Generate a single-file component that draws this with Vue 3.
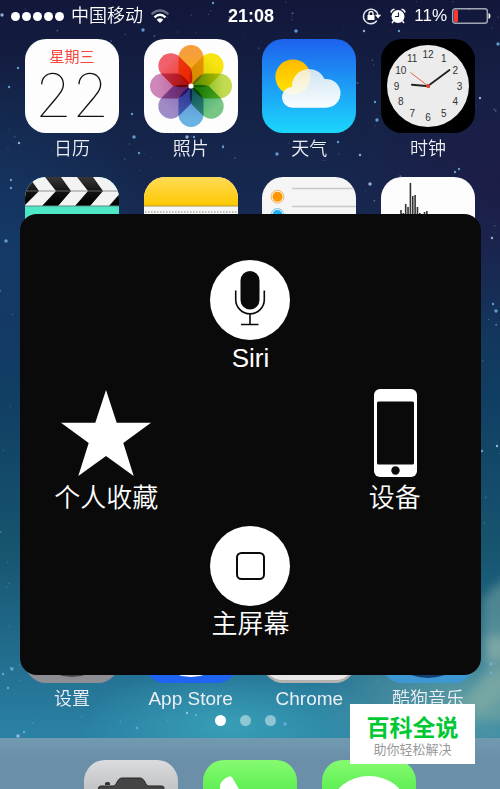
<template>
  <main class="phone">
    <svg class="wallpaper" viewBox="0 0 500 789" preserveAspectRatio="none" aria-hidden="true">
      <defs>
        <linearGradient id="sky" x1="0" y1="0" x2="0" y2="1">
          <stop offset="0" stop-color="#12173a" />
          <stop offset="0.12" stop-color="#142145" />
          <stop offset="0.3" stop-color="#172b54" />
          <stop offset="0.5" stop-color="#103e62" />
          <stop offset="0.7" stop-color="#175570" />
          <stop offset="0.84" stop-color="#236f90" />
          <stop offset="0.93" stop-color="#2a81a4" />
          <stop offset="1" stop-color="#2a7898" />
        </linearGradient>
        <radialGradient id="blue-glow">
          <stop offset="0" stop-color="#14406f" stop-opacity="0.7" />
          <stop offset="1" stop-color="#14406f" stop-opacity="0" />
        </radialGradient>
        <radialGradient id="violet-glow">
          <stop offset="0" stop-color="#1e1b45" stop-opacity="0.8" />
          <stop offset="1" stop-color="#1e1b45" stop-opacity="0" />
        </radialGradient>
        <radialGradient id="teal-glow">
          <stop offset="0" stop-color="#3ba6bb" stop-opacity="0.8" />
          <stop offset="1" stop-color="#3ba6bb" stop-opacity="0" />
        </radialGradient>
        <radialGradient id="pale-glow">
          <stop offset="0" stop-color="#6fa9a6" stop-opacity="0.7" />
          <stop offset="1" stop-color="#6fa9a6" stop-opacity="0" />
        </radialGradient>
        <filter id="mist" filterUnits="userSpaceOnUse" x="380" y="520" width="220" height="280">
          <feGaussianBlur stdDeviation="5" />
        </filter>
      </defs>
      <rect width="500" height="789" fill="url(#sky)" />
      <ellipse cx="0" cy="250" rx="150" ry="190" fill="url(#blue-glow)" />
      <ellipse cx="500" cy="180" rx="170" ry="150" fill="url(#violet-glow)" />
      <ellipse cx="230" cy="725" rx="150" ry="60" fill="url(#teal-glow)" />
      <ellipse cx="460" cy="700" rx="150" ry="90" fill="url(#pale-glow)" />
      <g filter="url(#mist)">
        <path d="M482 602L492 588L510 578V720H440L470 690L486 670Z" fill="#7fa9a4" opacity="0.5" />
        <path d="M484 640L496 634L508 640V656L488 662Z" fill="#a9c4b4" opacity="0.4" />
        <path d="M470 700L490 672L510 664V690L480 714Z" fill="#8db5a8" opacity="0.4" />
      </g>
      <circle
        v-for="(s, i) in stars"
        :key="i"
        :cx="s.x"
        :cy="s.y"
        :r="s.r"
        :fill="s.color"
        :opacity="s.o"
      />
    </svg>

    <header class="status-bar">
      <div class="status-left">
        <span class="signal"><i v-for="n in 5" :key="n"></i></span>
        <span class="carrier">中国移动</span>
        <svg class="wifi" viewBox="0 0 20 16" aria-hidden="true">
          <g fill="none" stroke-width="2">
            <path d="M1.5 6.2Q10 -1.4 18.500 6.2" stroke="#6d7386" />
            <path d="M4.500 9.300Q10 4.200 15.500 9.300" stroke="#fff" stroke-width="2.400" />
          </g>
          <path d="M6.700 11.700Q10 9 13.300 11.700L10 15Z" fill="#fff" />
        </svg>
      </div>
      <time class="clock-time">21:08</time>
      <div class="status-right">
        <svg class="lock" viewBox="0 0 20 18" aria-hidden="true">
          <path d="M14.800 13.600A7.300 7.300 0 1 1 16 8.500" fill="none" stroke="#e8eaf0" stroke-width="1.400" />
          <path d="M13 7.800H19.200L16.100 11.500Z" fill="#fff" />
          <rect x="5.500" y="8" width="7" height="5" fill="#fff" />
          <path d="M7 8V6.500A2 2 0 0 1 11 6.500V8" fill="none" stroke="#fff" stroke-width="1.300" />
        </svg>
        <svg class="alarm" viewBox="0 0 16 16" aria-hidden="true">
          <circle cx="8" cy="8.500" r="6.500" fill="#fff" />
          <path d="M1 4.500A4 4 0 0 1 4.500 1.200M15 4.500A4 4 0 0 0 11.500 1.200" stroke="#fff" stroke-width="1.600" fill="none" />
          <path d="M3.500 13L2 15M12.500 13L14 15" stroke="#fff" stroke-width="1.500" />
          <path d="M8.500 4.500V8.500H5" fill="none" stroke="#141a3b" stroke-width="1.100" />
        </svg>
        <span class="percent">11%</span>
        <svg class="battery" viewBox="0 0 39 16" aria-hidden="true">
          <rect x="0.700" y="0.700" width="34.600" height="14.600" rx="2.500" fill="none" stroke="#a3a6b5" stroke-width="1.400" />
          <rect x="2" y="2" width="4" height="12" rx="1" fill="#ff3a30" />
          <path d="M36.500 5Q38.500 5.500 38.500 8T36.500 11Z" fill="#fff" />
        </svg>
      </div>
    </header>

    <section class="home">
      <div class="row">
        <button class="app" type="button">
          <span class="icon calendar">
            <span class="weekday">星期三</span>
            <span class="day">22</span>
          </span>
          <span class="name">日历</span>
        </button>
        <button class="app" type="button">
          <span class="icon">
            <svg viewBox="0 0 94 94">
              <defs>
                <linearGradient
                  v-for="(p, i) in petals"
                  :id="`petal-${i}`"
                  :key="i"
                  x1="0"
                  y1="0"
                  x2="0"
                  y2="1"
                >
                  <stop offset="0.200" :stop-color="p.tip" />
                  <stop offset="1" :stop-color="p.base" />
                </linearGradient>
              </defs>
              <rect width="94" height="94" fill="#fdfdfd" />
              <g transform="translate(47 47)">
                <path
                  v-for="(p, i) in petals"
                  :key="i"
                  class="petal"
                  d="M-12.500 -28.500A12.500 12.500 0 0 1 12.500 -28.500V-13Q9 -5 0 0Q-9 -5 -12.500 -13Z"
                  :fill="`url(#petal-${i})`"
                  :transform="`rotate(${i * 45})`"
                />
                <circle r="2.600" fill="#fff" />
              </g>
            </svg>
          </span>
          <span class="name">照片</span>
        </button>
        <button class="app" type="button">
          <span class="icon">
            <svg viewBox="0 0 94 94">
              <defs>
                <linearGradient id="day" x1="0" y1="0" x2="0" y2="1">
                  <stop offset="0" stop-color="#1e62ee" />
                  <stop offset="1" stop-color="#1bd6fc" />
                </linearGradient>
                <linearGradient id="sun" x1="0" y1="0" x2="0" y2="1">
                  <stop offset="0" stop-color="#ffb900" />
                  <stop offset="1" stop-color="#ffe600" />
                </linearGradient>
                <linearGradient id="cloud" x1="0" y1="0" x2="0" y2="1">
                  <stop offset="0" stop-color="#f2f3f2" stop-opacity="0.84" />
                  <stop offset="1" stop-color="#fff" stop-opacity="0.97" />
                </linearGradient>
              </defs>
              <rect width="94" height="94" fill="url(#day)" />
              <circle cx="31" cy="38" r="17.600" fill="url(#sun)" />
              <path
                d="M31 68.700A10.500 10.500 0 0 1 30 47.700A17 17 0 0 1 62.500 40A14.400 14.400 0 1 1 64 68.700Z"
                fill="url(#cloud)"
              />
            </svg>
          </span>
          <span class="name">天气</span>
        </button>
        <button class="app" type="button">
          <span class="icon">
            <svg viewBox="0 0 94 94">
              <rect width="94" height="94" fill="#000" />
              <circle cx="47" cy="47" r="41" fill="#ececec" />
              <text
                v-for="n in hours"
                :key="n.label"
                class="hour"
                :x="n.x"
                :y="n.y"
                text-anchor="middle"
              >{{ n.label }}</text>
              <path d="M48 47.200L31 45.800" stroke="#222" stroke-width="2" stroke-linecap="round" />
              <path d="M47 47L68.500 31" stroke="#222" stroke-width="1.800" stroke-linecap="round" />
              <path d="M49 48.500L29.500 33.500" stroke="#e0513c" stroke-width="0.900" />
              <circle cx="47" cy="47" r="2" fill="#d8452c" />
            </svg>
          </span>
          <span class="name">时钟</span>
        </button>
      </div>

      <div class="row">
        <button class="app" type="button" aria-label="Videos">
          <span class="icon">
            <svg viewBox="0 0 94 94">
              <defs>
                <linearGradient id="slate" gradientUnits="userSpaceOnUse" x1="0" y1="0" x2="0" y2="29">
                  <stop offset="0" stop-color="#383838" />
                  <stop offset="0.500" stop-color="#111" />
                  <stop offset="1" stop-color="#000" />
                </linearGradient>
              </defs>
              <rect width="94" height="94" fill="#4fe8c6" />
              <rect width="94" height="29" fill="#f3f3f3" />
              <path
                d="M-12 0H4L14 14L-1 29H-16L-1 14ZM20 0H36L46 14L33 29H17L31 14ZM52 0H68L78 14L65 29H50L63 14ZM97 14H110V29H84Z"
                fill="url(#slate)"
              />
              <path d="M0 14H94" stroke="#777" stroke-width="0.800" />
              <path d="M0 29H94" stroke="#5d8a80" stroke-width="1" />
            </svg>
          </span>
        </button>
        <button class="app" type="button" aria-label="Notes">
          <span class="icon">
            <svg viewBox="0 0 94 94">
              <defs>
                <linearGradient id="pad" x1="0" y1="0" x2="0" y2="1">
                  <stop offset="0" stop-color="#ffdb55" />
                  <stop offset="1" stop-color="#fdc800" />
                </linearGradient>
              </defs>
              <rect width="94" height="94" fill="#f6f6f4" />
              <rect width="94" height="29" fill="url(#pad)" />
              <path d="M0 29H94" stroke="#b39a45" stroke-width="1" />
              <path d="M1 35H94" stroke="#aaa" stroke-width="1.500" stroke-dasharray="1.500 1.500" />
            </svg>
          </span>
        </button>
        <button class="app" type="button" aria-label="Reminders">
          <span class="icon">
            <svg viewBox="0 0 94 94">
              <rect width="94" height="94" fill="#f5f5f5" />
              <path d="M30 11.500H94M30 29.500H94" stroke="#c9c9c9" stroke-width="1.500" />
              <circle cx="15.500" cy="19.700" r="6.400" fill="none" stroke="#f6b45c" stroke-width="1" />
              <circle cx="15.500" cy="19.700" r="5" fill="#ff9500" />
              <circle cx="15.500" cy="38" r="6.400" fill="none" stroke="#6cc0ee" stroke-width="1" />
              <circle cx="15.500" cy="38" r="5" fill="#1badf8" />
            </svg>
          </span>
        </button>
        <button class="app" type="button" aria-label="Voice Memos">
          <span class="icon">
            <svg viewBox="0 0 94 94">
              <rect width="94" height="94" fill="#fdfdfd" />
              <rect
                v-for="(top, i) in wave"
                :key="i"
                :x="19.2 + i * 2.35"
                :y="top"
                width="1.600"
                :height="94 - top * 2 + 10"
                fill="#333"
              />
            </svg>
          </span>
        </button>
      </div>

      <div class="row last">
        <button class="app" type="button">
          <span class="icon">
            <svg viewBox="0 0 94 94">
              <rect width="94" height="94" fill="#8d8e94" />
              <circle cx="47" cy="47" r="41" fill="#444549" />
            </svg>
          </span>
          <span class="name">设置</span>
        </button>
        <button class="app" type="button">
          <span class="icon">
            <svg viewBox="0 0 94 94">
              <rect width="94" height="94" fill="#1f63f1" />
              <circle cx="47" cy="47" r="39" fill="none" stroke="#fff" stroke-width="4" />
            </svg>
          </span>
          <span class="name latin">App Store</span>
        </button>
        <button class="app" type="button">
          <span class="icon">
            <svg viewBox="0 0 94 94">
              <rect width="94" height="94" fill="#b4b1b1" />
              <rect y="-10" width="94" height="101" rx="21" fill="#e9e7e7" />
            </svg>
          </span>
          <span class="name latin">Chrome</span>
        </button>
        <button class="app" type="button">
          <span class="icon">
            <svg viewBox="0 0 94 94">
              <rect width="94" height="94" fill="#3d97d3" />
              <ellipse cx="47" cy="47" rx="46" ry="42" fill="#123f70" />
            </svg>
          </span>
          <span class="name">酷狗音乐</span>
        </button>
      </div>
    </section>

    <nav class="pages" aria-label="Pages">
      <i class="on"></i><i></i><i></i>
    </nav>

    <footer class="dock">
      <button class="icon" type="button" aria-label="Camera">
        <svg viewBox="0 0 94 94">
          <defs>
            <linearGradient id="metal" x1="0" y1="0" x2="0" y2="1">
              <stop offset="0" stop-color="#dbdcde" />
              <stop offset="1" stop-color="#8b8c90" />
            </linearGradient>
          </defs>
          <rect width="94" height="94" fill="url(#metal)" />
          <path d="M21 25V23.500Q21 22 23 22H24.500Q26 22 26 23.500V25Z" fill="#333" />
          <path
            d="M14.500 70V28Q14.500 26 17 26H29C33 26 33 18 38 18H56C61 18 61 26 65 26H77.500Q80 26 80 28V70Z"
            fill="#454545"
            stroke="#262626"
            stroke-width="1"
          />
        </svg>
      </button>
      <button class="icon" type="button" aria-label="Phone">
        <svg viewBox="0 0 94 94">
          <defs>
            <linearGradient id="lime" x1="0" y1="0" x2="0" y2="1">
              <stop offset="0" stop-color="#86fb70" />
              <stop offset="1" stop-color="#0cd41c" />
            </linearGradient>
          </defs>
          <rect width="94" height="94" fill="url(#lime)" />
          <path
            d="M17 27Q17 20 26 16.500Q28 15.500 29.500 18L37 31Q38 33 35 35L32 38Q40 54 56 63L60 59Q62 57 64 58L77 66Q79 68 77 71Q70 82 56 77Q24 62 17 34Z"
            fill="#fff"
          />
        </svg>
      </button>
      <button class="icon" type="button" aria-label="Messages">
        <svg viewBox="0 0 94 94">
          <rect width="94" height="94" fill="url(#lime)" />
          <ellipse cx="47" cy="44" rx="36" ry="28" fill="#fff" />
          <path d="M27 64Q27 74 18 77Q30 78 38 70Z" fill="#fff" />
        </svg>
      </button>
    </footer>

    <section class="assistive" aria-label="AssistiveTouch">
      <button class="action siri" type="button">
        <svg class="round" viewBox="0 0 80 80">
          <circle cx="40" cy="40" r="40" fill="#fff" />
          <rect x="30.500" y="11" width="19" height="38.500" rx="9.500" fill="#0a0a0a" />
          <path d="M25.700 30.500V39.500A14.300 14.300 0 0 0 54.300 39.500V30.500" fill="none" stroke="#0a0a0a" stroke-width="1.600" />
          <path d="M40 54V64.500M31 64.500H48.500" stroke="#0a0a0a" stroke-width="1.600" />
        </svg>
        <span>Siri</span>
      </button>
      <button class="action favorites" type="button">
        <svg class="tall" viewBox="0 0 92 91">
          <path d="M46 4L56.700 36.700H91L63.300 57L73.700 90L46 70L18.300 90L28.700 57L1 36.700H35.300Z" fill="#fff" />
        </svg>
        <span>个人收藏</span>
      </button>
      <button class="action device" type="button">
        <svg class="tall" viewBox="0 0 92 91">
          <rect x="25" y="3" width="43" height="88" rx="6" fill="#fff" />
          <rect x="28" y="15.500" width="37" height="63" rx="1.500" fill="#0a0a0a" />
          <circle cx="46.500" cy="84.500" r="4.200" fill="#0a0a0a" />
        </svg>
        <span>设备</span>
      </button>
      <button class="action home-button" type="button">
        <svg class="round" viewBox="0 0 80 80">
          <circle cx="40" cy="40" r="40" fill="#fff" />
          <rect x="27" y="27" width="27" height="26" rx="4.500" fill="none" stroke="#0a0a0a" stroke-width="2" />
        </svg>
        <span>主屏幕</span>
      </button>
    </section>

    <aside class="badge">
      <strong>百科全说</strong>
      <span>助你轻松解决</span>
    </aside>
  </main>
</template>

<script setup>
// Petals, clockwise from the top
const petals = [
  { tip: '#f99f3c', base: '#fbb800' },
  { tip: '#f9e610', base: '#cfc400' },
  { tip: '#c4dd50', base: '#62b000' },
  { tip: '#78c884', base: '#20a070' },
  { tip: '#6bb4e4', base: '#5f7fd0' },
  { tip: '#a08cc8', base: '#8560b8' },
  { tip: '#cf88bb', base: '#b8508c' },
  { tip: '#f2626c', base: '#f02a10' }
];

// Top edge of each bar of the sound wave
const wave = [33, 36, 27, 30, 6, 19, 18, 30, 36, 37, 35, 34];

const hours = Array.from({ length: 12 }, (_, i) => {
  const angle = ((i + 1) * Math.PI) / 6;
  return {
    label: i + 1,
    x: 47 + Math.sin(angle) * 31.5,
    y: 50.5 - Math.cos(angle) * 31.5
  };
});

// Fixed seed so the sky is the same on every load
let seed = 41;
const random = () => {
  seed = (seed * 16807) % 2147483647;
  return seed / 2147483647;
};

const faint = Array.from({ length: 420 }, () => ({
  x: random() * 500,
  y: random() * 740,
  r: 0.4 + random() * 0.6,
  o: 0.15 + random() * 0.4,
  color: '#8fb4dc'
}));

const bright = [
  [2, 15], [18, 68], [213, 3], [143, 30], [364, 31], [399, 31], [296, 31], [9, 87],
  [19, 143], [134, 137], [139, 153], [132, 114], [187, 137], [194, 137], [223, 147],
  [277, 154], [360, 155], [338, 142], [377, 120], [375, 102], [480, 98], [498, 44],
  [11, 180], [11, 188], [370, 184], [455, 172], [459, 169], [6, 241], [492, 238],
  [493, 304], [496, 311], [482, 451], [497, 446], [12, 669], [3, 674], [8, 688],
  [18, 736], [24, 732], [137, 728], [285, 724], [187, 713], [196, 715], [491, 664], [491, 673]
].map(([x, y], i) => ({
  x,
  y,
  r: i % 3 === 0 ? 1.7 : 1.2,
  o: 0.85,
  color: i % 4 === 0 ? '#a9c9ef' : '#6fb0e6'
}));

const stars = [...faint, ...bright];
</script>

<style>
body {
  margin: 0;
  background: #12173a;
}
</style>

<style scoped>
.phone {
  position: relative;
  display: flex;
  flex-direction: column;
  min-height: 100vh;
  overflow: hidden;
  color: #fff;
  font-family: "Liberation Sans", "Noto Sans CJK SC", sans-serif;
}

button {
  padding: 0;
  border: 0;
  background: none;
  color: inherit;
  font: inherit;
  cursor: pointer;
}

svg {
  display: block;
}

.wallpaper {
  position: absolute;
  inset: 0;
  width: 100%;
  height: 100%;
}

/* Status bar */
.status-bar {
  position: relative;
  display: grid;
  grid-template-columns: 1fr auto 1fr;
  align-items: center;
  height: 32px;
  padding: 0 9px 0 11px;
  font-size: 18px;
  line-height: 32px;
}

.status-left,
.status-right {
  display: flex;
  align-items: center;
}

.status-left {
  gap: 7px;
}

.status-right {
  justify-content: flex-end;
}

.signal {
  display: flex;
  gap: 2px;
}

.signal i {
  width: 9px;
  height: 9px;
  border-radius: 50%;
  background: #fff;
}

.carrier {
  font-weight: 350;
}

.wifi {
  width: 20px;
  height: 16px;
}

.clock-time {
  font-weight: 700;
}

.lock {
  width: 20px;
  height: 18px;
  margin-right: 8px;
}

.alarm {
  width: 16px;
  height: 16px;
  margin-right: 8px;
}

.percent {
  margin-right: 5px;
  font-size: 17px;
}

.battery {
  width: 39px;
  height: 16px;
}

/* Home screen */
.home {
  position: relative;
  display: flex;
  flex: 1;
  flex-direction: column;
  gap: 15px;
  padding: 7px 25px 0;
}

.row {
  display: flex;
  justify-content: space-between;
}

.row.last {
  margin-top: auto;
}

.app {
  display: flex;
  flex-direction: column;
  align-items: center;
  width: 94px;
}

.icon {
  flex: none;
  width: 94px;
  height: 94px;
  overflow: hidden;
  border-radius: 21px;
}

.icon svg {
  width: 94px;
  height: 94px;
}

.name {
  margin-top: 3px;
  color: #eceef3;
  font-size: 18px;
  font-weight: 350;
  line-height: 26px;
  white-space: nowrap;
}

.name.latin {
  font-size: 19px;
}

.petal {
  mix-blend-mode: multiply;
}

.hour {
  fill: #333;
  font-size: 10px;
}

.calendar {
  display: flex;
  flex-direction: column;
  align-items: center;
  background: #fdfdfd;
}

.weekday {
  margin-top: 8px;
  color: #f9453c;
  font-size: 15px;
  font-weight: 400;
  line-height: 20px;
}

.day {
  color: #111;
  font-family: Inter, Roboto, sans-serif;
  font-size: 60px;
  font-weight: 100;
  line-height: 56px;
}

/* Page dots */
.pages {
  position: relative;
  display: flex;
  justify-content: center;
  gap: 14px;
  height: 23px;
  padding: 3px 10px 0 0;
}

.pages i {
  width: 11px;
  height: 11px;
  border-radius: 50%;
  background: rgba(255, 255, 255, 0.45);
}

.pages i.on {
  background: #fff;
}

.dock {
  position: relative;
  display: flex;
  justify-content: center;
  gap: 25px;
  height: 29px;
  padding-top: 22px;
  overflow: hidden;
  background: linear-gradient(#719bb1, #6b8fa9 20px);
}

/* AssistiveTouch menu */
.assistive {
  position: absolute;
  top: 214px;
  right: 19px;
  left: 20px;
  display: grid;
  grid-template-areas:
    ". siri ."
    "favorites . device"
    ". home .";
  grid-template-columns: repeat(3, 1fr);
  align-content: space-between;
  box-sizing: border-box;
  aspect-ratio: 1;
  padding: 46px 14px 33px;
  border-radius: 17px;
  background: #0a0a0a;
}

.action {
  display: flex;
  flex-direction: column;
  align-items: center;
  font-size: 26px;
  font-weight: 350;
  line-height: 36px;
}

.siri {
  grid-area: siri;
}

.favorites {
  grid-area: favorites;
}

.device {
  grid-area: device;
}

.home-button {
  grid-area: home;
}

.round {
  width: 80px;
  height: 80px;
}

.tall {
  width: 92px;
  height: 91px;
  margin-bottom: 3px;
}

.badge {
  position: absolute;
  right: 25px;
  bottom: 25px;
  display: flex;
  flex-direction: column;
  align-items: center;
  box-sizing: border-box;
  width: 125px;
  height: 60px;
  padding-top: 10px;
  background: #fff;
}

.badge strong {
  color: #00c832;
  font-size: 23px;
  font-weight: 700;
  line-height: 28px;
}

.badge span {
  color: #999;
  font-size: 13px;
  line-height: 16px;
}
</style>
